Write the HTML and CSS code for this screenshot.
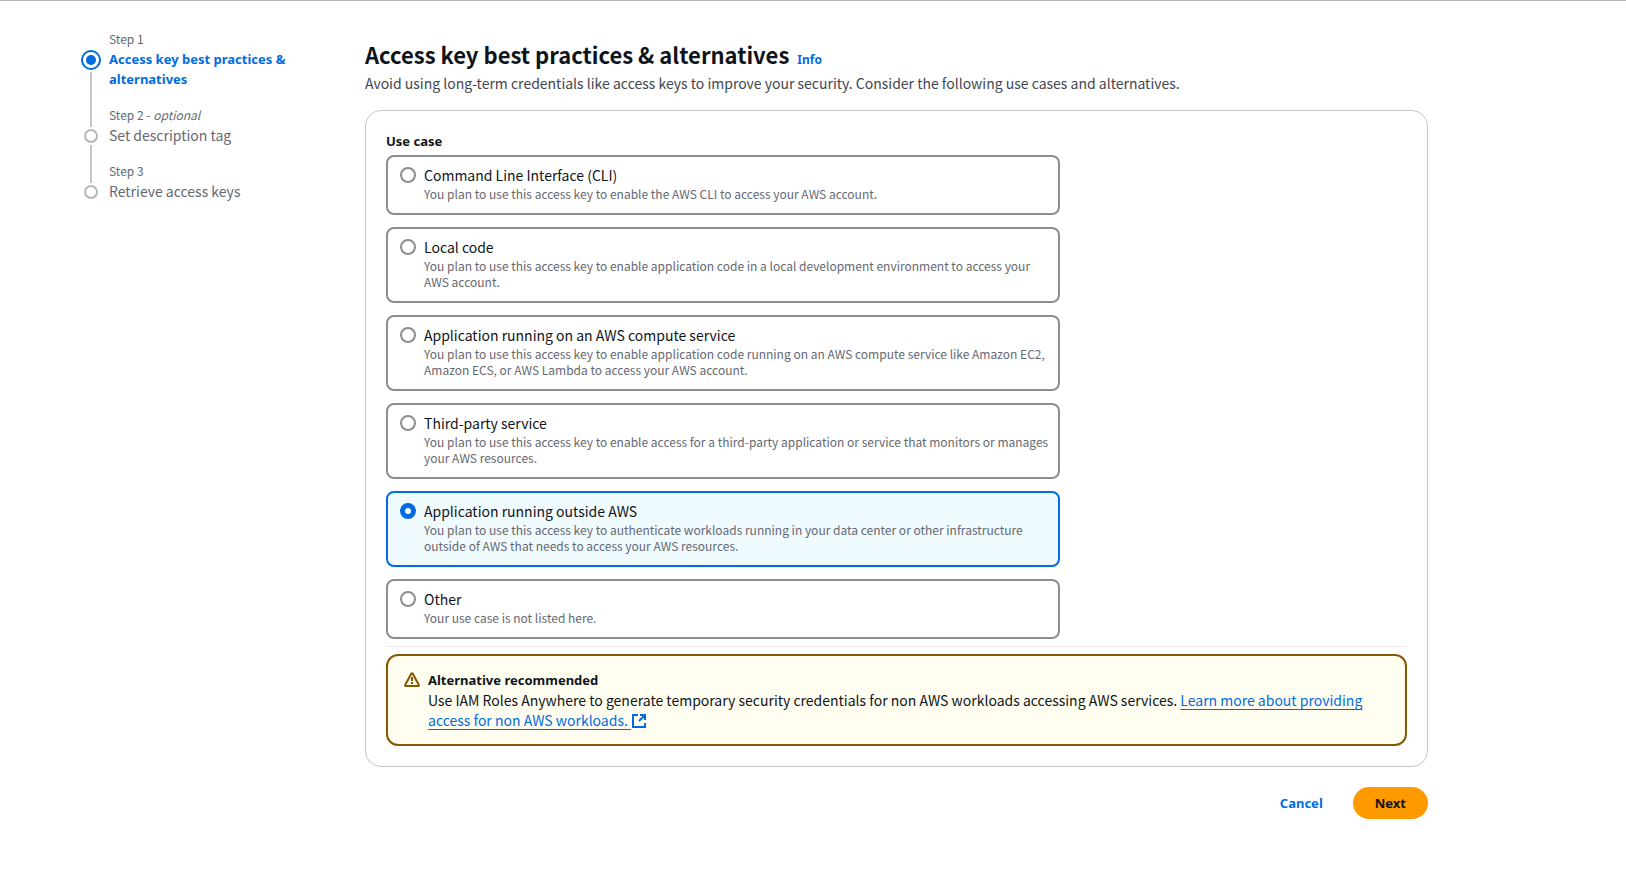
FILE: index.html
```html
<!DOCTYPE html>
<html lang="en">
<head>
<meta charset="utf-8">
<meta name="viewport" content="width=device-width, initial-scale=1">
<title>Access key best practices &amp; alternatives</title>
<link rel="stylesheet" href="styles.css">
</head>
<body>
<div class="wizard">
  <nav class="steps" aria-label="Steps">
    <ol class="step-list">
      <li class="step step-active" aria-current="step">
        <span class="step-rail"><span class="dot"></span><span class="line"></span></span>
        <div class="step-text"><span class="step-label">Step 1</span><span class="step-title">Access key best practices &amp; alternatives</span></div>
      </li>
      <li class="step">
        <span class="step-rail"><span class="dot"></span><span class="line"></span></span>
        <div class="step-text"><span class="step-label">Step 2 - <i>optional</i></span><span class="step-title">Set description tag</span></div>
      </li>
      <li class="step">
        <span class="step-rail"><span class="dot"></span></span>
        <div class="step-text"><span class="step-label">Step 3</span><span class="step-title">Retrieve access keys</span></div>
      </li>
    </ol>
  </nav>
  <main class="content">
    <header class="page-header">
      <div class="heading"><h1>Access key best practices &amp; alternatives</h1><a class="info" href="#info">Info</a></div>
      <p class="lead">Avoid using long-term credentials like access keys to improve your security. Consider the following use cases and alternatives.</p>
    </header>
    <form class="panel" id="use-case-form">
      <fieldset class="options">
        <legend>Use case</legend>
        <label class="tile"><input type="radio" name="use" value="cli"><span class="tile-text"><span class="tile-title">Command Line Interface (CLI)</span><span class="tile-desc">You plan to use this access key to enable the AWS CLI to access your AWS account.</span></span></label>
        <label class="tile"><input type="radio" name="use" value="local"><span class="tile-text"><span class="tile-title">Local code</span><span class="tile-desc">You plan to use this access key to enable application code in a local development environment to access your AWS account.</span></span></label>
        <label class="tile"><input type="radio" name="use" value="compute"><span class="tile-text"><span class="tile-title">Application running on an AWS compute service</span><span class="tile-desc">You plan to use this access key to enable application code running on an AWS compute service like Amazon EC2, Amazon ECS, or AWS Lambda to access your AWS account.</span></span></label>
        <label class="tile"><input type="radio" name="use" value="third"><span class="tile-text"><span class="tile-title">Third-party service</span><span class="tile-desc">You plan to use this access key to enable access for a third-party application or service that monitors or manages your AWS resources.</span></span></label>
        <label class="tile"><input type="radio" name="use" value="outside" checked><span class="tile-text"><span class="tile-title">Application running outside AWS</span><span class="tile-desc">You plan to use this access key to authenticate workloads running in your data center or other infrastructure outside of AWS that needs to access your AWS resources.</span></span></label>
        <label class="tile"><input type="radio" name="use" value="other"><span class="tile-text"><span class="tile-title">Other</span><span class="tile-desc">Your use case is not listed here.</span></span></label>
      </fieldset>
      <hr>
      <section class="alert">
        <svg class="alert-icon" viewBox="0 0 16 16" width="16" height="16" aria-hidden="true"><path d="M7.200 1.700Q8 .6 8.800 1.700L14.800 13Q15.300 14 14.200 14H1.800Q.7 14 1.200 13Z" fill="none" stroke="currentColor" stroke-width="2" stroke-linejoin="round"/><path d="M8 5v4M8 10v2" stroke="currentColor" stroke-width="2"/></svg>
        <div class="alert-body">
          <h2>Alternative recommended</h2>
          <p>Use IAM Roles Anywhere to generate temporary security credentials for non AWS workloads accessing AWS services. <a href="#workloads"><span class="link-text">Learn more about providing access for non AWS workloads.&nbsp;</span><svg class="external" viewBox="0 0 16 16" width="16" height="16" role="img" aria-label="Opens in a new tab"><path d="M7 2H2v12h12V10M9 2H14v5M14 2 8 8" fill="none" stroke="currentColor" stroke-width="2"/></svg></a></p>
        </div>
      </section>
    </form>
    <footer class="actions">
      <button class="btn" type="button">Cancel</button>
      <button class="btn btn-primary" type="submit" form="use-case-form">Next</button>
    </footer>
  </main>
</div>
</body>
</html>
```
FILE: styles.css
```css
* { box-sizing: border-box; }
body {
  margin: 0;
  border-top: 1px solid #b4b4bb;
  background: #fff;
  color: #0f141a;
  font: 14px/20px "Noto Sans CJK SC", "Noto Sans", sans-serif;
}
h1, h2, p, ol { margin: 0; padding: 0; }
a { color: #006ce0; }
.wizard {
  display: flex;
  gap: 64px;
  padding: 30px 198px 72px 81px;
}
.steps { flex: 0 0 220px; }
.step-list { list-style: none; }
.step { display: flex; gap: 8px; color: #656871; }
.step-rail {
  flex: 0 0 20px;
  display: flex;
  flex-direction: column;
  align-items: center;
  gap: 2px;
  margin-bottom: -20px;
  padding-top: 22px;
}
.dot {
  flex: none;
  width: 14px;
  height: 14px;
  border: 2px solid #b4b4bb;
  border-radius: 50%;
}
.line { flex: 1; width: 2px; background: #c6c6cd; }
.step-active .step-rail { padding-top: 19px; }
.step-active .dot {
  width: 20px;
  height: 20px;
  border-color: #006ce0;
  padding: 3px;
  background: #006ce0 content-box;
}
.step-text { padding-bottom: 18px; }
.step-label, .step-title { display: block; }
.step-label { font-size: 12px; line-height: 16px; margin-bottom: 2px; }
.step-active .step-title {
  color: #006ce0;
  font: 700 13px/20px "Noto Sans", sans-serif;
}
.content { flex: 1; min-width: 0; }
.page-header { padding: 8px 0 17px; }
.heading { display: flex; align-items: baseline; gap: 8px; }
h1 { font-size: 22px; line-height: 30px; font-weight: 700; }
.info { font: 700 12px/16px "Noto Sans", sans-serif; text-decoration: none; }
.lead { margin-top: 4px; color: #424650; }
.panel { border: 1px solid #c6c6cd; border-radius: 16px; padding: 20px; }
.options {
  display: flex;
  flex-direction: column;
  gap: 12px;
  width: 66%;
  min-width: 0;
  margin: 0;
  padding: 0;
  border: 0;
}
legend { padding: 0 0 4px; font: 700 13px/20px "Noto Sans", sans-serif; }
.tile {
  display: flex;
  align-items: flex-start;
  gap: 8px;
  padding: 8px 8px 11px 12px;
  border: 2px solid #8c8c94;
  border-radius: 8px;
}
.tile:has(:checked) { border-color: #006ce0; background: #f0fbff; }
.tile input {
  appearance: none;
  flex: none;
  width: 16px;
  height: 16px;
  margin: 2px 0 0;
  border: 2px solid #8c8c94;
  border-radius: 50%;
  background: #fff;
}
.tile input:checked { border: 5px solid #006ce0; }
.tile-title, .tile-desc { display: block; }
.tile-desc { margin-top: 1px; font-size: 12px; line-height: 16px; color: #656871; }
hr { margin: 7px 0; border: 0; border-top: 1px solid #ebebf0; }
.alert {
  display: flex;
  gap: 8px;
  padding: 14px 16px;
  border: 2px solid #855900;
  border-radius: 12px;
  background: #fffef0;
}
.alert-icon { flex: none; margin-top: 2px; color: #855900; }
.alert-body { flex: 1; }
h2 { font: 700 13px/20px "Noto Sans", sans-serif; }
.alert a { text-decoration: none; }
.link-text { text-decoration: underline 1px; text-underline-offset: 3px; }
.external { vertical-align: -3px; }
.actions { display: flex; justify-content: flex-end; gap: 8px; margin-top: 20px; }
.btn {
  padding: 6px 22px;
  border: 0;
  border-radius: 20px;
  background: none;
  color: #006ce0;
  font: 700 13px/20px "Noto Sans", sans-serif;
}
.btn-primary { background: #ff9900; color: #0f141a; }
```
